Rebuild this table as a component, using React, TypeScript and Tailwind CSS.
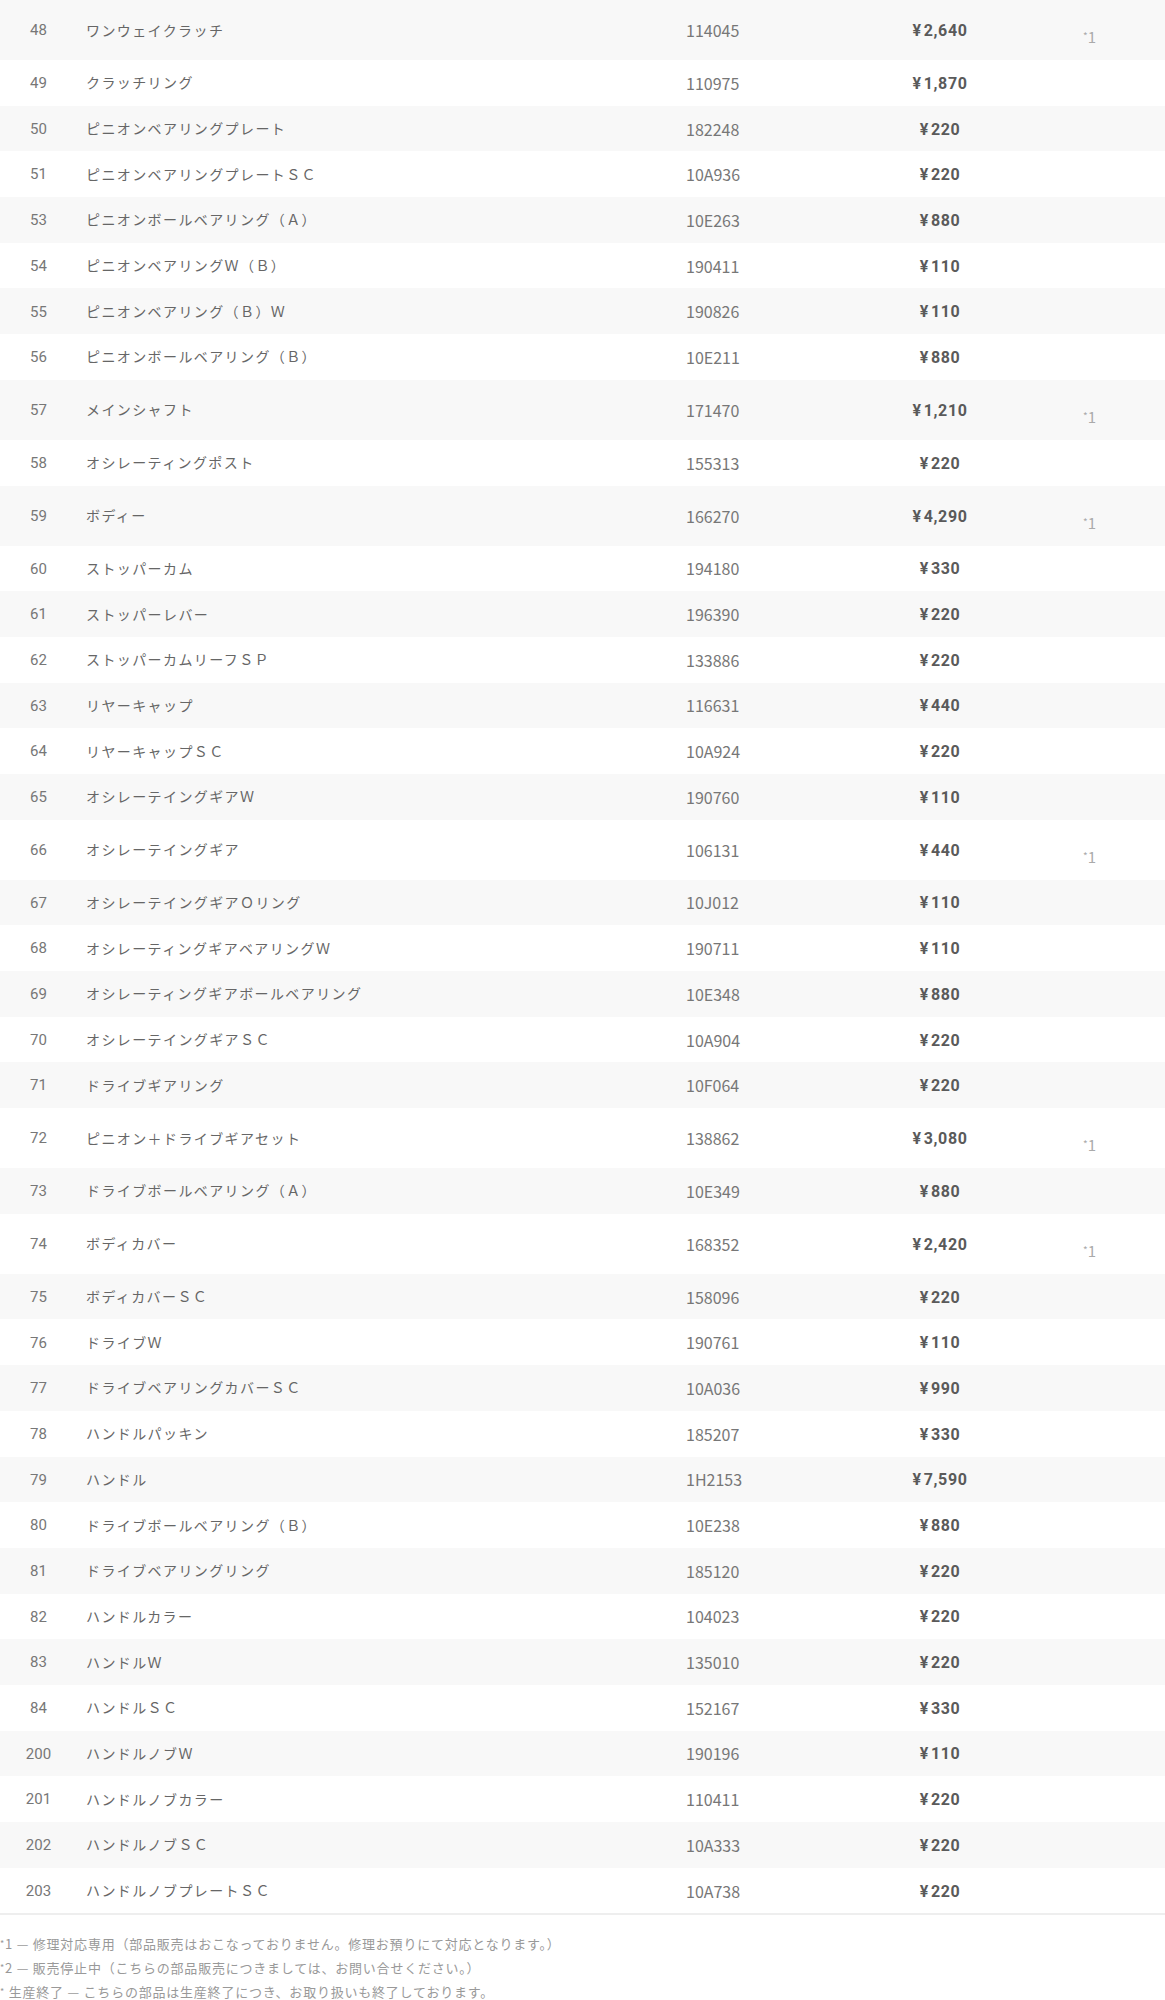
import React from "react";

type Part = {
    no: string;
    name: string;
    code: string;
    price: string;
    note?: string;
};

const parts: Part[] = [
    { no: "48", name: "ワンウェイクラッチ", code: "114045", price: "2,640", note: "1" },
    { no: "49", name: "クラッチリング", code: "110975", price: "1,870" },
    { no: "50", name: "ピニオンベアリングプレート", code: "182248", price: "220" },
    { no: "51", name: "ピニオンベアリングプレートＳＣ", code: "10A936", price: "220" },
    { no: "53", name: "ピニオンボールベアリング（Ａ）", code: "10E263", price: "880" },
    { no: "54", name: "ピニオンベアリングＷ（Ｂ）", code: "190411", price: "110" },
    { no: "55", name: "ピニオンベアリング（Ｂ）Ｗ", code: "190826", price: "110" },
    { no: "56", name: "ピニオンボールベアリング（Ｂ）", code: "10E211", price: "880" },
    { no: "57", name: "メインシャフト", code: "171470", price: "1,210", note: "1" },
    { no: "58", name: "オシレーティングポスト", code: "155313", price: "220" },
    { no: "59", name: "ボディー", code: "166270", price: "4,290", note: "1" },
    { no: "60", name: "ストッパーカム", code: "194180", price: "330" },
    { no: "61", name: "ストッパーレバー", code: "196390", price: "220" },
    { no: "62", name: "ストッパーカムリーフＳＰ", code: "133886", price: "220" },
    { no: "63", name: "リヤーキャップ", code: "116631", price: "440" },
    { no: "64", name: "リヤーキャップＳＣ", code: "10A924", price: "220" },
    { no: "65", name: "オシレーテイングギアＷ", code: "190760", price: "110" },
    { no: "66", name: "オシレーテイングギア", code: "106131", price: "440", note: "1" },
    { no: "67", name: "オシレーテイングギアＯリング", code: "10J012", price: "110" },
    { no: "68", name: "オシレーティングギアベアリングＷ", code: "190711", price: "110" },
    { no: "69", name: "オシレーティングギアボールベアリング", code: "10E348", price: "880" },
    { no: "70", name: "オシレーテイングギアＳＣ", code: "10A904", price: "220" },
    { no: "71", name: "ドライブギアリング", code: "10F064", price: "220" },
    { no: "72", name: "ピニオン＋ドライブギアセット", code: "138862", price: "3,080", note: "1" },
    { no: "73", name: "ドライブボールベアリング（Ａ）", code: "10E349", price: "880" },
    { no: "74", name: "ボディカバー", code: "168352", price: "2,420", note: "1" },
    { no: "75", name: "ボディカバーＳＣ", code: "158096", price: "220" },
    { no: "76", name: "ドライブＷ", code: "190761", price: "110" },
    { no: "77", name: "ドライブベアリングカバーＳＣ", code: "10A036", price: "990" },
    { no: "78", name: "ハンドルパッキン", code: "185207", price: "330" },
    { no: "79", name: "ハンドル", code: "1H2153", price: "7,590" },
    { no: "80", name: "ドライブボールベアリング（Ｂ）", code: "10E238", price: "880" },
    { no: "81", name: "ドライブベアリングリング", code: "185120", price: "220" },
    { no: "82", name: "ハンドルカラー", code: "104023", price: "220" },
    { no: "83", name: "ハンドルＷ", code: "135010", price: "220" },
    { no: "84", name: "ハンドルＳＣ", code: "152167", price: "330" },
    { no: "200", name: "ハンドルノブＷ", code: "190196", price: "110" },
    { no: "201", name: "ハンドルノブカラー", code: "110411", price: "220" },
    { no: "202", name: "ハンドルノブＳＣ", code: "10A333", price: "220" },
    { no: "203", name: "ハンドルノブプレートＳＣ", code: "10A738", price: "220" },
];

const jp = "font-['Noto_Sans_CJK_JP',sans-serif]";
const num = "font-['Roboto','Noto_Sans_CJK_JP',sans-serif]";

function PartRow({ part, shaded }: { part: Part; shaded: boolean }) {
    return (
        <div
            className={`grid grid-cols-[77px_609px_154px_200px_1fr] items-center ${
                part.note ? "h-[60px]" : "h-[45.7px]"
            } ${shaded ? "bg-[#f8f8f8]" : "bg-white"}`}
        >
            <div className={`${num} mt-[1px] text-center text-[15px] text-[#777]`}>{part.no}</div>
            <div className={`${jp} pl-[9px] text-[14px] tracking-[0.1em] text-[#666]`}>{part.name}</div>
            <div className={`${jp} text-[16px] text-[#777]`}>{part.code}</div>
            <div className={`${num} mt-[2px] text-center text-[16px] font-bold tracking-[0.04em] text-[#5a5a5a]`}>
                ¥<span className="ml-[2px]">{part.price}</span>
            </div>
            <div className={`${jp} pl-[43px] text-[15px] text-[#aaa]`}>
                {part.note && (
                    <span className="mt-[15px] inline-block">
                        <span className="relative -top-[3px] text-[10px]">*</span>
                        {part.note}
                    </span>
                )}
            </div>
        </div>
    );
}

export default function App() {
    return (
        <div className="w-[1165px] bg-white">
            {/* Parts table */}
            <div className="border-b-2 border-[#eeeeee]">
                {parts.map((p, i) => (
                    <PartRow key={p.no} part={p} shaded={i % 2 === 0} />
                ))}
            </div>

            {/* Footnotes */}
            <div className={`${jp} pt-[18px] text-[13px] leading-[22px] tracking-[0.06em] text-[#999]`}>
                <p>
                    <span className="relative -top-[2px] text-[9px]">*</span>1 — 修理対応専用（部品販売はおこなっておりません。修理お預りにて対応となります。）
                </p>
                <p>
                    <span className="relative -top-[2px] text-[9px]">*</span>2 — 販売停止中（こちらの部品販売につきましては、お問い合せください。）
                </p>
                <p>
                    <span className="relative -top-[2px] text-[9px]">*</span> 生産終了 — こちらの部品は生産終了につき、お取り扱いも終了しております。
                </p>
            </div>
        </div>
    );
}
